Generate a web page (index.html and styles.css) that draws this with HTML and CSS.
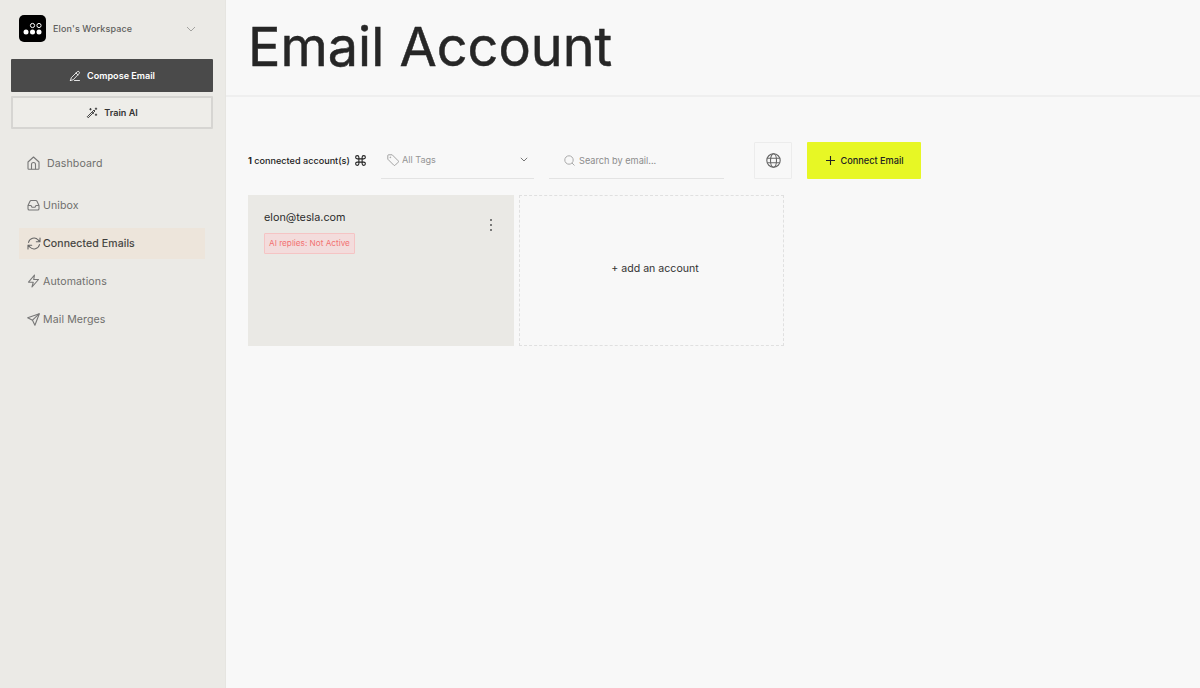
FILE: index.html
```html
<!DOCTYPE html>
<html lang="en">
<head>
<meta charset="utf-8">
<title>Email Account</title>
<link rel="stylesheet" href="styles.css">
</head>
<body>
<div class="app">
  <aside class="sidebar">
    <div class="workspace">
      <span class="logo">
        <svg width="27" height="27" viewBox="0 0 27 27"><rect width="27" height="27" rx="5" fill="#000"/><circle cx="13.5" cy="10.5" r="2.1" fill="none" stroke="#fff" stroke-width="1"/><circle cx="20" cy="10.5" r="2.1" fill="none" stroke="#fff" stroke-width="1"/><circle cx="7" cy="17" r="2.5" fill="#fff"/><circle cx="13.5" cy="17" r="2.5" fill="#fff"/><circle cx="20" cy="17" r="2.5" fill="#fff"/></svg>
      </span>
      <span class="ws-name">Elon's Workspace</span>
      <svg class="ws-chev" width="10" height="6" viewBox="0 0 10 6"><path d="M1 1l4 4 4-4" fill="none" stroke="#a3a3a0" stroke-width="1"/></svg>
    </div>
    <button class="btn-compose">
      <svg width="12" height="12" viewBox="0 0 24 24" fill="none" stroke="#fff" stroke-width="1.7" stroke-linecap="round" stroke-linejoin="round"><path d="M3 21l1.5-5.5L16.5 3.5a2.4 2.4 0 0 1 3.6 3.6L8.5 19.5 3 21z"/><path d="M14 6l4 4"/><path d="M11 21h10"/></svg>
      Compose Email
    </button>
    <button class="btn-train">
      <svg width="12" height="12" viewBox="0 0 24 24" fill="none" stroke="#333" stroke-width="1.8" stroke-linecap="round" stroke-linejoin="round"><path d="M3 21L16 8l2 2L5 23z" transform="translate(0 -2)"/><path d="M13 11l2 2"/><path d="M9 3v3M7.500 4.500h3M20 2v3M18.500 3.500h3M20 14v3M18.500 15.500h3"/></svg>
      Train AI
    </button>
    <nav class="nav">
      <a class="nav-item nav-first">
        <svg width="13" height="14" viewBox="0 0 13 14" fill="none" stroke="#777" stroke-width="1.1" stroke-linejoin="round"><path d="M1 6l5.500-5L12 6v6.500a.8.8 0 0 1-.8.8H1.800a.8.8 0 0 1-.8-.8z"/><path d="M4.500 13.300V8.500a2 2 0 0 1 4 0v4.800"/></svg>
        <span class="label-wide">Dashboard</span>
      </a>
      <a class="nav-item">
        <svg width="13" height="12" viewBox="0 0 13 12" fill="none" stroke="#777" stroke-width="1.1" stroke-linejoin="round"><path d="M1 6.500V9.700A1.300 1.300 0 0 0 2.300 11h8.400A1.300 1.300 0 0 0 12 9.700V6.500L10 2.200A1.200 1.200 0 0 0 8.900 1.500H4.100A1.200 1.200 0 0 0 3 2.200z"/><path d="M1 6.500h3l1 1.700h3l1-1.700h3"/></svg>
        <span>Unibox</span>
      </a>
      <a class="nav-item active">
        <svg width="14" height="13" viewBox="0 0 14 13" fill="none" stroke="#666" stroke-width="1.1" stroke-linecap="round" stroke-linejoin="round"><path d="M1.500 5.500A5.600 5.600 0 0 1 11.200 3L13 4.700M13 1v3.700H9.300"/><path d="M12.500 7.500A5.600 5.600 0 0 1 2.800 10L1 8.300M1 12V8.300h3.700"/></svg>
        <span>Connected Emails</span>
      </a>
      <a class="nav-item">
        <svg width="13" height="14" viewBox="0 0 13 14" fill="none" stroke="#777" stroke-width="1.1" stroke-linejoin="round"><path d="M7.500 1L1.500 8.200h4.800L5 13l6.500-7.500H6.700z"/></svg>
        <span>Automations</span>
      </a>
      <a class="nav-item">
        <svg width="13" height="13" viewBox="0 0 13 13" fill="none" stroke="#777" stroke-width="1.1" stroke-linejoin="round"><path d="M12.300.700L.700 4.700l4.800 2.500 2.400 5z"/><path d="M5.500 7.200L12.300.700"/></svg>
        <span>Mail Merges</span>
      </a>
    </nav>
  </aside>
  <main class="main">
    <header class="header"><h1>Email Account</h1></header>
    <section class="toolbar">
      <div class="count">
        <span><b>1</b> connected account(s)</span>
        <svg width="13" height="13" viewBox="0 0 24 24" fill="none" stroke="#222" stroke-width="2" stroke-linecap="round" stroke-linejoin="round"><path d="M18 3a3 3 0 0 0-3 3v12a3 3 0 1 0 3-3H6a3 3 0 1 0 3 3V6a3 3 0 1 0-3 3h12a3 3 0 0 0 0-6z"/></svg>
      </div>
      <div class="select">
        <svg width="12" height="12" viewBox="0 0 12 12" fill="none" stroke="#999" stroke-width=".9" stroke-linejoin="round"><path d="M.8 1.500a.7.700 0 0 1 .7-.7h3.700l6 6a1 1 0 0 1 0 1.400l-3 3a1 1 0 0 1-1.400 0l-6-6z"/><circle cx="3.300" cy="3.300" r=".4"/></svg>
        <span class="select-label">All Tags</span>
        <svg class="select-chev" width="8" height="5" viewBox="0 0 8 5"><path d="M.8.800L4 4 7.200.800" fill="none" stroke="#777" stroke-width="1"/></svg>
      </div>
      <div class="search">
        <svg width="11" height="11" viewBox="0 0 11 11" fill="none" stroke="#aaa" stroke-width="1"><circle cx="5" cy="5" r="4.200"/><path d="M8 8l2.500 2.500"/></svg>
        <span>Search by email...</span>
      </div>
      <button class="globe" aria-label="Language">
        <svg width="15" height="15" viewBox="0 0 15 15" fill="none" stroke="#666" stroke-width="1.1"><circle cx="7.500" cy="7.500" r="6.700"/><ellipse cx="7.500" cy="7.500" rx="3" ry="6.700"/><path d="M1.200 5.300h12.600M1.200 9.700h12.600"/></svg>
      </button>
      <button class="connect">
        <svg width="9" height="9" viewBox="0 0 9 9" stroke="#222" stroke-width="1.100"><path d="M4.500 0v9M0 4.500h9"/></svg>
        Connect Email
      </button>
    </section>
    <section class="cards">
      <article class="card">
        <div class="card-email">elon@tesla.com</div>
        <span class="badge">AI replies: Not Active</span>
        <span class="more"><i></i><i></i><i></i></span>
      </article>
      <div class="add">+ add an account</div>
    </section>
  </main>
</div>
</body>
</html>
```
FILE: styles.css
```css
* { box-sizing: border-box; }
html, body { margin: 0; height: 100%; }
body { font-family: Inter, "Liberation Sans", sans-serif; background: #f8f8f8; color: #222; overflow: hidden; }
button { font-family: inherit; cursor: pointer; }
.app { display: flex; height: 688px; }
.sidebar { width: 226px; flex: none; background: #ebeae6; border-right: 1px solid #e6e5e1; padding: 15px 12px 0 11px; }
.workspace { display: flex; align-items: center; height: 27px; padding-left: 8px; margin-bottom: 17px; }
.logo { display: block; width: 27px; height: 27px; }
.logo svg { display: block; }
.ws-name { margin-left: 7px; font-size: 9px; font-weight: 500; color: #5f5f5d; letter-spacing: .12px; }
.ws-chev { margin-left: auto; margin-right: 17px; }
.btn-compose, .btn-train { display: flex; align-items: center; justify-content: center; gap: 6px; width: 202px; font-size: 9.100px; font-weight: 600; }
.btn-compose { height: 33px; background: #4a4a4a; border: 0; border-radius: 1px; color: #fff; margin-bottom: 4px; }
.btn-train { height: 33px; background: #eeede9; border: 2px solid #d6d5d2; color: #333; border-radius: 1px; }
.nav { display: flex; flex-direction: column; margin-top: 19px; padding-left: 8px; }
.nav-item { display: flex; align-items: center; gap: 3px; width: 186px; height: 30px; margin-bottom: 8px; padding-left: 8px; font-size: 10.600px; font-weight: 400; color: #6f6f6d; letter-spacing: .1px; }
.nav-first { margin-bottom: 12px; }
.nav-first .label-wide { margin-left: 4px; }
.active { gap: 2px; background: #ede5db; color: #3c3c3a; height: 31px; margin-bottom: 7px; -webkit-text-stroke: .15px #3c3c3a; }
.main { flex: 1; min-width: 0; display: flex; flex-direction: column; }
.header { height: 97px; border-bottom: 2px solid #efefef; padding: 13px 0 0 22px; }
h1 { margin: 0; font-size: 54px; line-height: 68px; font-weight: 400; color: #262626; -webkit-text-stroke: .5px #262626; }
.toolbar { display: flex; align-items: stretch; height: 37px; margin-top: 45px; padding-left: 22px; }
.count { display: flex; align-items: center; gap: 4px; width: 133px; font-size: 9.100px; font-weight: 500; color: #222; }
.count b { font-weight: 700; }
.select { display: flex; align-items: center; width: 153px; padding: 0 6px 1px; gap: 3px; border-bottom: 1px solid #e3e3e3; color: #959595; font-size: 9.100px; }
.select-chev { margin-left: auto; margin-right: 0; }
.search { display: flex; align-items: center; gap: 4px; width: 175px; margin-left: 15px; padding-left: 15px; border-bottom: 1px solid #e3e3e3; color: #8c8c8c; font-size: 9.200px; }
.globe { display: flex; align-items: center; justify-content: center; width: 38px; margin-left: 30px; background: #f8f8f8; border: 1px solid #ececec; border-radius: 1px; }
.connect { display: flex; align-items: center; justify-content: center; gap: 5px; width: 114px; margin-left: 15px; padding-left: 8px; background: #e7f725; border: 0; border-radius: 1px; color: #222; font-size: 9.200px; font-weight: 500; }
.cards { display: flex; gap: 5px; margin-top: 16px; padding-left: 22px; }
.card { position: relative; width: 266px; height: 151px; background: #eae9e5; padding: 15px 16px; }
.card-email { font-size: 10.800px; line-height: 15px; color: #2c2c2c; }
.badge { display: inline-block; margin-top: 8px; height: 21px; line-height: 19px; padding: 0 4px; border: 1px solid #f5c4c4; background: #f3dcdc; color: #f27272; font-size: 8.200px; border-radius: 1px; }
.more { position: absolute; top: 24px; right: 22px; display: flex; flex-direction: column; gap: 3px; }
.more i { display: block; width: 2px; height: 2px; border-radius: 50%; background: #555; }
.add { display: flex; align-items: center; justify-content: center; width: 265px; height: 151px; padding: 0 0 5px 7px; border: 1px dashed #e0e0e0; font-size: 10.600px; color: #333; }
```
